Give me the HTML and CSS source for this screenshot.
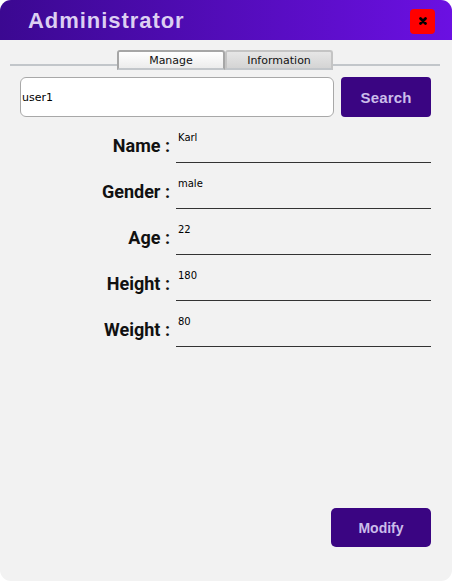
FILE: index.html
```html
<!DOCTYPE html>
<html>
<head>
<meta charset="utf-8">
<link rel="stylesheet" href="styles.css">
</head>
<body>
<div class="window">
  <div class="header">
    <div class="title">Administrator</div>
    <button class="close"><svg width="10" height="10" viewBox="0 0 10 10"><path d="M2.5 2.5 L7.5 7.5 M7.5 2.5 L2.5 7.5" stroke="#000" stroke-width="2.8" stroke-linecap="round"/></svg></button>
  </div>
  <div class="tabbar">
    <div class="tabline"></div>
    <div class="tab active">Manage</div>
    <div class="tab">Information</div>
    <div class="tabline"></div>
  </div>
  <div class="searchrow">
    <div class="input">user1</div>
    <button class="btn search">Search</button>
  </div>
  <div class="form">
    <div class="label">Name :</div><div class="field">Karl</div>
    <div class="label">Gender :</div><div class="field">male</div>
    <div class="label">Age :</div><div class="field">22</div>
    <div class="label">Height :</div><div class="field">180</div>
    <div class="label">Weight :</div><div class="field">80</div>
  </div>
  <div class="spacer"></div>
  <div class="footer">
    <button class="btn modify">Modify</button>
  </div>
</div>
</body>
</html>
```

FILE: styles.css
```css
html, body {
  margin: 0;
  padding: 0;
  background: #ffffff;
}
.window {
  width: 452px;
  height: 581px;
  background: #f2f2f2;
  border-radius: 11px;
  overflow: hidden;
  display: flex;
  flex-direction: column;
  font-family: "Liberation Sans", Arial, sans-serif;
}
.header {
  height: 40px;
  flex: none;
  background: linear-gradient(to right, #3b0891, #6b10e2);
  display: flex;
  align-items: center;
  justify-content: space-between;
  padding: 0 17px 0 28px;
}
.title {
  color: #dccff2;
  font-size: 22px;
  font-weight: bold;
  letter-spacing: 0.95px;
  margin-top: 1px;
}
.close {
  width: 25px;
  height: 25px;
  background: #ff0000;
  border: none;
  border-radius: 4px;
  padding: 0;
  display: flex;
  align-items: center;
  justify-content: center;
  margin-top: 2px;
}
.tabbar {
  margin-top: 10px;
  display: flex;
  align-items: flex-start;
  padding: 0 12px 0 10px;
  height: 20px;
  flex: none;
}
.tabline {
  flex: 1;
  height: 14px;
  border-bottom: 2px solid #c2c6ca;
}
.tab {
  width: 108px;
  height: 20px;
  box-sizing: border-box;
  font-family: "DejaVu Sans", sans-serif;
  font-size: 11px;
  color: #111;
  display: flex;
  align-items: center;
  justify-content: center;
  border: 2px solid #c4c4c4;
  border-bottom: 2px solid #c2c6ca;
  border-radius: 3px 3px 0 0;
  background: linear-gradient(#e6e6e6, #d4d4d4);
}
.tab.active {
  border-color: #a6a6a6;
  border-bottom-color: #c2c6ca;
  background: linear-gradient(#ffffff, #ececec);
}
.searchrow {
  display: flex;
  gap: 7px;
  padding: 7px 21px 0 20px;
  flex: none;
}
.input {
  width: 315px;
  height: 40px;
  box-sizing: border-box;
  background: #fff;
  border: 1px solid #a8a8a8;
  border-radius: 6px;
  font-family: "DejaVu Sans", sans-serif;
  font-size: 11px;
  display: flex;
  align-items: center;
  padding-left: 1px;
  color: #000;
}
.btn {
  background: #3a0582;
  color: #cbbdea;
  border: none;
  border-radius: 4px;
  font-family: "Liberation Sans", Arial, sans-serif;
  font-weight: bold;
  padding: 0;
}
.search {
  width: 90px;
  height: 40px;
  font-size: 15px;
  letter-spacing: 0.2px;
}
.form {
  display: grid;
  grid-template-columns: 150px 255px;
  column-gap: 6px;
  padding-left: 20px;
}
.label {
  height: 46px;
  box-sizing: border-box;
  padding-top: 19px;
  line-height: 20px;
  text-align: right;
  font-family: "Roboto", "Liberation Sans", sans-serif;
  font-weight: bold;
  font-size: 18px;
  color: #111;
}
.field {
  height: 46px;
  box-sizing: border-box;
  border-bottom: 1px solid #333;
  padding-top: 15px;
  padding-left: 2px;
  font-family: "DejaVu Sans", sans-serif;
  font-size: 10px;
  color: #000;
}
.spacer {
  flex: 1;
}
.footer {
  display: flex;
  justify-content: flex-end;
  padding: 0 21px 34px 0;
}
.modify {
  width: 100px;
  height: 39px;
  font-size: 14px;
  border-radius: 5px;
}
```
